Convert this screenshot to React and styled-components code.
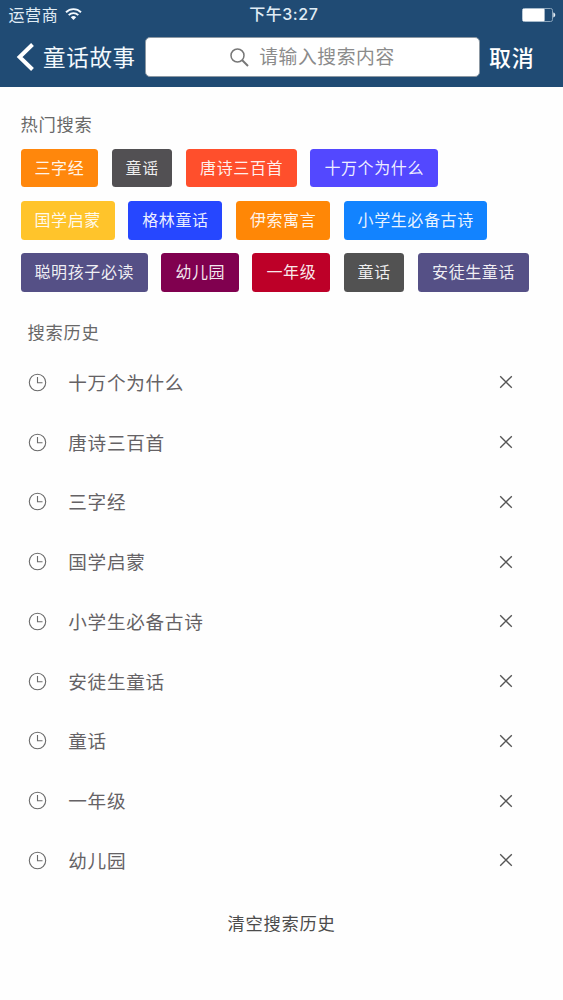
import React from "react";
import styled, { createGlobalStyle } from "styled-components";

const GlobalStyle = createGlobalStyle`
  * { box-sizing: border-box; }
  body {
    margin: 0;
    background: #fefefe;
    font-family: "Noto Sans CJK SC", sans-serif;
  }
  button { font-family: inherit; border: 0; padding: 0; background: none; }
`;

const Screen = styled.div`
  width: 563px;
  height: 1000px;
  overflow: hidden;
  background: #fefefe;
`;

const Header = styled.header`
  height: 87px;
  background: #204b74;
  color: #fff;
`;

const StatusBar = styled.div`
  display: grid;
  grid-template-columns: 1fr auto 1fr;
  align-items: center;
  height: 29px;
  padding: 0 7px 0 8.5px;
  font-size: 16px;
  line-height: 29px;
  letter-spacing: 0.6px;
  color: #e0edf6;
`;

const Carrier = styled.div`
  display: flex;
  align-items: center;
  gap: 7px;
`;

const Clock = styled.div`
  padding-left: 3px;
  font-weight: 500;
  font-family: Inter, "Noto Sans CJK SC", sans-serif;
  letter-spacing: 0.55px;
`;

const BatterySlot = styled.div`
  display: flex;
  justify-content: flex-end;
`;

const NavBar = styled.nav`
  display: flex;
  align-items: center;
  height: 56px;
  padding-left: 16px;
`;

const BackButton = styled.button`
  display: flex;
  align-items: center;
  gap: 8px;
  width: 129px;
  color: #f3f9fd;
  font-size: 22.5px;
  line-height: 30px;
  letter-spacing: 0.7px;
  white-space: nowrap;
`;

const NavLabel = styled.span`
  padding-bottom: 2px;
`;

const SearchBox = styled.div`
  display: flex;
  align-items: center;
  justify-content: center;
  gap: 10px;
  width: 335px;
  height: 40px;
  border: 1px solid #8c98a3;
  border-radius: 5px;
  background: #fff;
  color: #8b8b8b;
  font-size: 18.8px;
  line-height: 28px;
  letter-spacing: 0.6px;
`;

const CancelButton = styled.button`
  margin-left: 9px;
  padding-bottom: 2px;
  color: #fff;
  font-size: 22px;
  font-weight: 500;
  line-height: 30px;
  letter-spacing: 0.7px;
`;

const SectionTitle = styled.h2`
  margin: 0;
  padding-left: ${(p) => p.$indent}px;
  font-size: 17.3px;
  font-weight: 400;
  line-height: 26px;
  letter-spacing: 0.7px;
  color: #686868;
`;

const HotSearch = styled.section`
  padding: 24.4px 0 0 20.5px;
`;

const TagList = styled.div`
  display: flex;
  flex-direction: column;
  gap: 13.4px;
  margin-top: 11.4px;
`;

const TagRow = styled.div`
  display: flex;
  gap: 13.6px;
`;

const Tag = styled.span`
  height: 38.7px;
  padding: 0 13.7px 0 14px;
  border-radius: 3.5px;
  background: ${(p) => p.$color};
  color: rgba(255, 255, 255, 0.92);
  font-size: 16px;
  line-height: 37.4px;
  letter-spacing: 0.6px;
  white-space: nowrap;
`;

const History = styled.section`
  padding-top: 27.8px;
`;

const HistoryList = styled.ul`
  margin: 7px 0 0;
  padding: 0;
  list-style: none;
`;

const HistoryItem = styled.li`
  display: flex;
  align-items: center;
  height: 59.75px;
  padding: 0 50.5px 0 28px;
`;

const Term = styled.span`
  flex: 1;
  margin-left: 21.3px;
  padding-bottom: 1px;
  color: #656265;
  font-size: 18.6px;
  line-height: 28px;
  letter-spacing: 0.72px;
`;

const RemoveButton = styled.button`
  display: flex;
`;

const ClearButton = styled.button`
  display: block;
  margin: 20px auto 0;
  color: #4c4c4c;
  font-size: 17.3px;
  line-height: 26px;
  letter-spacing: 0.75px;
`;

const WifiIcon = () => (
  <svg width="17" height="14" viewBox="0 0 17 14" fill="none" stroke="#f4faff" strokeWidth="1.9">
    <path d="M1 4.2a10.7 10.7 0 0 1 15 0" />
    <path d="M3.7 7.1a6.8 6.8 0 0 1 9.6 0" />
    <path d="M8.5 12 5.8 9.3a3.8 3.8 0 0 1 5.4 0Z" fill="#f4faff" stroke="none" />
  </svg>
);

const BatteryIcon = () => (
  <svg width="34" height="14" viewBox="0 0 34 14">
    <rect x="0.5" y="0.5" width="30" height="13" rx="1.8" fill="none" stroke="#8aa4bb" />
    <rect x="0.6" y="0.8" width="22" height="12.4" rx="1" fill="#fff" />
    <path d="M31.3 4.6c2.6.6 2.6 4.2 0 4.8Z" fill="#e8f0f6" />
  </svg>
);

const BackIcon = () => (
  <svg width="19" height="28" viewBox="0 0 19 28" fill="none" stroke="#fff" strokeWidth="4">
    <path d="M16.5 1.5 3.6 14l12.9 12.5" />
  </svg>
);

const SearchIcon = () => (
  <svg width="19" height="19" viewBox="0 0 19 19" fill="none" stroke="#777" strokeWidth="1.5">
    <circle cx="7.5" cy="7.5" r="6.5" />
    <path d="m12 12 6 6" strokeWidth="1.9" />
  </svg>
);

const HistoryIcon = () => (
  <svg width="19" height="19" viewBox="0 0 19 19" fill="none" stroke="#6a6a6a" strokeWidth="1.1">
    <circle cx="9.5" cy="9.5" r="8.2" />
    <path d="M9.5 4v5.7h5" />
  </svg>
);

const CrossIcon = () => (
  <svg width="14" height="14" viewBox="0 0 14 14" fill="none" stroke="#555" strokeWidth="1.3">
    <path d="m1.2 1.2 11.6 11.6M12.8 1.2 1.2 12.8" />
  </svg>
);

const tagRows = [
  [
    ["三字经", "#ff870c"],
    ["童谣", "#525053"],
    ["唐诗三百首", "#ff4f2c"],
    ["十万个为什么", "#5348ff"],
  ],
  [
    ["国学启蒙", "#ffc42b"],
    ["格林童话", "#2647ff"],
    ["伊索寓言", "#ff8706"],
    ["小学生必备古诗", "#1283ff"],
  ],
  [
    ["聪明孩子必读", "#555086"],
    ["幼儿园", "#80004f"],
    ["一年级", "#bd0028"],
    ["童话", "#525252"],
    ["安徒生童话", "#555086"],
  ],
];

const searches = [
  "十万个为什么",
  "唐诗三百首",
  "三字经",
  "国学启蒙",
  "小学生必备古诗",
  "安徒生童话",
  "童话",
  "一年级",
  "幼儿园",
];

export default function App() {
  return (
    <Screen>
      <GlobalStyle />
      <Header>
        <StatusBar>
          <Carrier>
            运营商
            <WifiIcon />
          </Carrier>
          <Clock>下午3:27</Clock>
          <BatterySlot>
            <BatteryIcon />
          </BatterySlot>
        </StatusBar>
        <NavBar>
          <BackButton>
            <BackIcon />
            <NavLabel>童话故事</NavLabel>
          </BackButton>
          <SearchBox>
            <SearchIcon />
            <NavLabel>请输入搜索内容</NavLabel>
          </SearchBox>
          <CancelButton>取消</CancelButton>
        </NavBar>
      </Header>
      <HotSearch>
        <SectionTitle $indent={0}>热门搜索</SectionTitle>
        <TagList>
          {tagRows.map((row) => (
            <TagRow key={row[0][0]}>
              {row.map(([label, color]) => (
                <Tag key={label} $color={color}>{label}</Tag>
              ))}
            </TagRow>
          ))}
        </TagList>
      </HotSearch>
      <History>
        <SectionTitle $indent={27.5}>搜索历史</SectionTitle>
        <HistoryList>
          {searches.map((term) => (
            <HistoryItem key={term}>
              <HistoryIcon />
              <Term>{term}</Term>
              <RemoveButton aria-label="删除">
                <CrossIcon />
              </RemoveButton>
            </HistoryItem>
          ))}
        </HistoryList>
        <ClearButton>清空搜索历史</ClearButton>
      </History>
    </Screen>
  );
}
